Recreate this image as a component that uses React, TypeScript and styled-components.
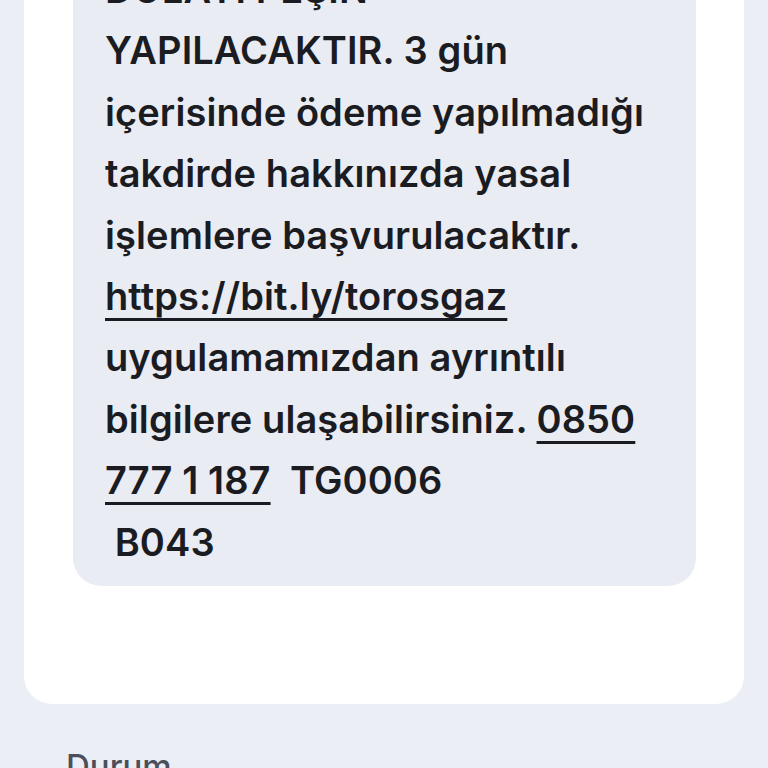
import React from "react";
import styled, { createGlobalStyle } from "styled-components";

const Global = createGlobalStyle`
  html, body {
    margin: 0;
    padding: 0;
    background: #eceef5;
    overflow: hidden;
  }
  body {
    font-family: Inter, "Noto Sans", "Liberation Sans", sans-serif;
    -webkit-font-smoothing: antialiased;
  }
`;

const Screen = styled.div`
  width: 768px;
  height: 768px;
  overflow: hidden;
  background: #eceef5;
`;

const Scroller = styled.div`
  margin-top: -85px;
  display: flex;
  flex-direction: column;
`;

const Card = styled.section`
  margin: 0 24px;
  padding: 20px 48px 118px 49px;
  background: #ffffff;
  border-radius: 0 0 28px 28px;
`;

const Bubble = styled.div`
  background: #eaecf4;
  border-radius: 28px;
  padding: 24px 24px 13px 32px;
`;

const MessageText = styled.p`
  margin: 0;
  font-size: 38px;
  line-height: 61.4px;
  font-weight: 600;
  color: #1b1c21;
  white-space: nowrap;
  letter-spacing: 0.1px;
`;

const Link = styled.span`
  text-decoration: underline;
  text-decoration-thickness: 3px;
  text-underline-offset: 8px;
`;

const SectionTitle = styled.h2`
  margin: 42px 0 0 66px;
  font-size: 33px;
  font-weight: 500;
  color: #4b4f5b;
  line-height: 40px;
`;

export default function App() {
  return (
    <Screen>
      <Global />
      <Scroller>
        <Card>
          <Bubble>
            <MessageText>
              DOLAYI PEŞİN
              <br />
              YAPILACAKTIR. 3 gün
              <br />
              içerisinde ödeme yapılmadığı
              <br />
              takdirde hakkınızda yasal
              <br />
              işlemlere başvurulacaktır.
              <br />
              <Link>https://bit.ly/torosgaz</Link>
              <br />
              uygulamamızdan ayrıntılı
              <br />
              bilgilere ulaşabilirsiniz. <Link>0850</Link>
              <br />
              <Link>777 1 187</Link>&nbsp; TG0006
              <br />
              &nbsp;B043
            </MessageText>
          </Bubble>
        </Card>
        <SectionTitle>Durum</SectionTitle>
      </Scroller>
    </Screen>
  );
}
